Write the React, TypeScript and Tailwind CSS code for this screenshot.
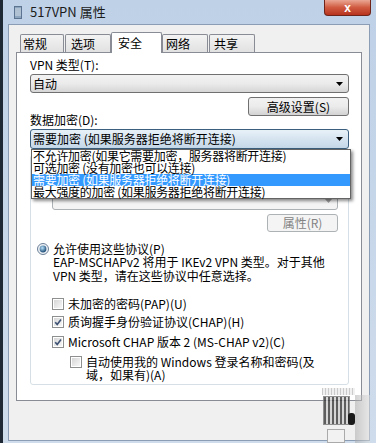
import React from 'react';

const encOptions = [
  '不允许加密(如果它需要加密，服务器将断开连接)',
  '可选加密 (没有加密也可以连接)',
  '需要加密 (如果服务器拒绝将断开连接)',
  '最大强度的加密 (如果服务器拒绝将断开连接)',
];

const tabs = [
  { label: '常规', w: 'w-[44px] ml-[4px] pl-[2px]' },
  { label: '选项', w: 'w-[46px] ml-[1px] pl-[5px]' },
  { label: '安全', w: 'w-[51px] pl-[6px]', active: true },
  { label: '网络', w: 'w-[46px] pl-[3px]' },
  { label: '共享', w: 'w-[46px] ml-[1px] pl-[4px]' },
];

function Arrow({ color = '#000' }: { color?: string }) {
  return (
    <svg width="7" height="4" viewBox="0 0 7 4">
      <path d="M0 0h7L3.5 4z" fill={color} />
    </svg>
  );
}

function Check({ checked }: { checked?: boolean }) {
  return (
    <div className="w-[12px] h-[12px] shrink-0 border border-[#8e8f8f] bg-white p-[1px]">
      <div className="relative w-full h-full bg-gradient-to-br from-[#d6d6d6] to-[#f7f7f7]">
        {checked && (
          <svg className="absolute inset-0" width="8" height="8" viewBox="0 0 8 8">
            <path d="M1.2 4.2 L3.2 6.4 L7 1.4" fill="none" stroke="#3e5273" strokeWidth="1.6" />
          </svg>
        )}
      </div>
    </div>
  );
}

function Radio() {
  return (
    <svg width="12" height="12" viewBox="0 0 12 12" className="shrink-0">
      <defs>
        <radialGradient id="rdot" cx="40%" cy="35%" r="65%">
          <stop offset="0" stopColor="#b9e2fb" />
          <stop offset="1" stopColor="#1b4a73" />
        </radialGradient>
      </defs>
      <circle cx="6" cy="6" r="5.5" fill="#eef2f6" stroke="#6b7f96" />
      <circle cx="6" cy="6" r="3.4" fill="url(#rdot)" />
    </svg>
  );
}

export default function App() {
  return (
    <div className="relative w-[376px] h-[443px] overflow-hidden flex bg-gradient-to-b from-[#bfd1e7] to-[#cfdcec] text-[12px] text-black font-['Noto_Sans_CJK_SC',sans-serif]">
      <div className="w-[3px] bg-[#1e2935]" />
      <div className="flex-1 flex flex-col pl-[5px] pr-[6px] pb-[2px]">
        {/* title bar */}
        <div className="h-[24px] flex items-center">
          <svg width="8" height="13" viewBox="0 0 8 13" className="ml-[6px]">
            <rect x="0.5" y="0.5" width="7" height="12" fill="#8ea5bf" stroke="#5d7490" />
            <path d="M1 3h6M1 5h6M1 7h6M1 9h6" stroke="#e6edf5" strokeWidth="0.8" />
          </svg>
          <span className="ml-[8px] text-[13px] leading-[16px] text-[#1b1b1b]">517VPN 属性</span>
        </div>

        {/* client */}
        <div className="flex-1 bg-[#f0f0f0] border border-[#8a9db4] px-[7px] pt-[7px]">
          <div className="relative z-10 flex items-end h-[21px]">
            {tabs.map((t) =>
              t.active ? (
                <div
                  key={t.label}
                  className={`${t.w} h-[21px] bg-white border border-b-0 border-[#898c95] rounded-t-[2px] text-[12px] leading-[18px] pt-[1px]`}
                >
                  {t.label}
                </div>
              ) : (
                <div
                  key={t.label}
                  className={`${t.w} h-[18px] mb-[1px] bg-gradient-to-b from-[#f3f3f3] to-[#e1e1e1] border border-b-0 border-[#898c95] rounded-t-[2px] text-[12px] leading-[18px]`}
                >
                  {t.label}
                </div>
              )
            )}
          </div>

          <div className="-mt-[1px] w-[346px] h-[349px] bg-white border border-[#898c95] flex flex-col pl-[13px] pr-[12px] pt-[5px]">
            <div className="leading-[14px]">VPN 类型(T):</div>
            <div className="mt-[2px] h-[19px] flex items-center justify-between pl-[2px] pr-[5px] rounded-[3px] border border-[#707070] bg-gradient-to-b from-[#f2f2f2] via-[#ebebeb] to-[#d6d6d6]">
              <span className="leading-[14px]">自动</span>
              <Arrow />
            </div>
            <div className="mt-[4px] self-end w-[101px] h-[19px] flex items-center justify-center rounded-[3px] border border-[#707070] bg-gradient-to-b from-[#f2f2f2] via-[#ebebeb] to-[#d3d3d3] leading-[14px]">
              高级设置(S)
            </div>
            <div className="-mt-[3px] leading-[14px]">数据加密(D):</div>

            <div className="relative mt-[2px]">
              <div className="h-[20px] flex items-center justify-between pl-[2px] pr-[5px] rounded-[3px] border border-[#3b5f7e] bg-gradient-to-b from-[#e8f1f8] to-[#c4d7e8]">
                <span className="leading-[14px]">需要加密 (如果服务器拒绝将断开连接)</span>
                <Arrow />
              </div>

              {/* open list */}
              <div className="absolute top-full left-[1px] w-[320px] z-20 bg-white border border-[#646464] shadow-[2px_2px_3px_rgba(0,0,0,0.45)]">
                {encOptions.map((o, i) => (
                  <div
                    key={o}
                    className={`h-[12px] leading-[12px] pl-[1px] whitespace-nowrap tracking-[-0.3px] ${
                      i === 2 ? 'bg-[#3399ff] text-white' : ''
                    }`}
                  >
                    {o}
                  </div>
                ))}
              </div>
            </div>

            {/* auth group */}
            <div className="mt-[6px] border border-[#d5dfe5] rounded-[3px] flex flex-col pt-[35px] pb-[3px]">
              <div className="ml-[21px] mr-[10px] h-[19px] flex items-center justify-end pr-[5px] rounded-[3px] border border-[#adb2b5] bg-[#f4f4f4]">
                <Arrow color="#a0a0a0" />
              </div>
              <div className="mt-[4px] mr-[10px] self-end w-[71px] h-[18px] flex items-center justify-center rounded-[3px] border border-[#adb2b5] bg-[#f4f4f4] text-[#838383] leading-[14px]">
                属性(R)
              </div>

              <div className="mt-[10px] pl-[6px] h-[13px] flex items-center gap-[4px]">
                <Radio />
                <span className="leading-[13px]">允许使用这些协议(P)</span>
              </div>
              <div className="pl-[22px] leading-[14px] whitespace-nowrap">
                <div>EAP-MSCHAPv2 将用于 IKEv2 VPN 类型。对于其他</div>
                <div>VPN 类型，请在这些协议中任意选择。</div>
              </div>

              <div className="mt-[12px] pl-[21px] h-[18px] flex items-center gap-[4px]">
                <Check />
                <span className="leading-[14px]">未加密的密码(PAP)(U)</span>
              </div>
              <div className="pl-[21px] h-[18px] flex items-center gap-[4px]">
                <Check checked />
                <span className="leading-[14px]">质询握手身份验证协议(CHAP)(H)</span>
              </div>
              <div className="mt-[2px] pl-[21px] h-[18px] flex items-center gap-[4px]">
                <Check checked />
                <span className="leading-[14px]">Microsoft CHAP 版本 2 (MS-CHAP v2)(C)</span>
              </div>
              <div className="mt-[4px] pl-[39px] flex items-start gap-[4px]">
                <div className="mt-[1px]">
                  <Check />
                </div>
                <span className="leading-[13px] whitespace-nowrap">
                  自动使用我的 Windows 登录名称和密码(及
                  <br />
                  域，如果有)(A)
                </span>
              </div>
            </div>
          </div>
        </div>
      </div>

      {/* close button */}
      <div className="absolute top-0 right-[5px] w-[47px] h-[16px] rounded-b-[4px] border border-t-0 border-[#6e2418] bg-gradient-to-b from-[#e9a694] via-[#cf5a40] to-[#b8321d] flex items-center justify-center">
        <span className="text-white text-[12px] font-bold leading-[12px] font-['Liberation_Sans',sans-serif]">x</span>
      </div>

      {/* blurry screenshot remnant, bottom right */}
      <div className="absolute left-[322px] top-[388px] w-[33px] h-[55px]">
        <div className="h-[7px] bg-[repeating-linear-gradient(90deg,#a8a8a8_0_1px,#e6e6e6_1px_3px)] opacity-60" />
        <div className="mt-[1px] ml-[1px] w-[27px] h-[29px] border border-[#777] bg-[repeating-linear-gradient(90deg,#3a3a3a_0_2px,#cfcfcf_2px_4px)] opacity-80" />
        <div className="absolute left-[26px] top-[25px] w-[7px] h-[12px] bg-[#1a1a1a] rounded-[3px]" />
        <div className="mt-[4px] ml-[5px] w-[18px] h-[14px] bg-[#f2f2f2] border border-[#aaa]" />
      </div>
      <div className="absolute left-[355px] top-[395px] w-[15px] h-[48px] bg-gradient-to-r from-[#a5a5a5] to-[#e0e0e0] opacity-50" />
    </div>
  );
}
